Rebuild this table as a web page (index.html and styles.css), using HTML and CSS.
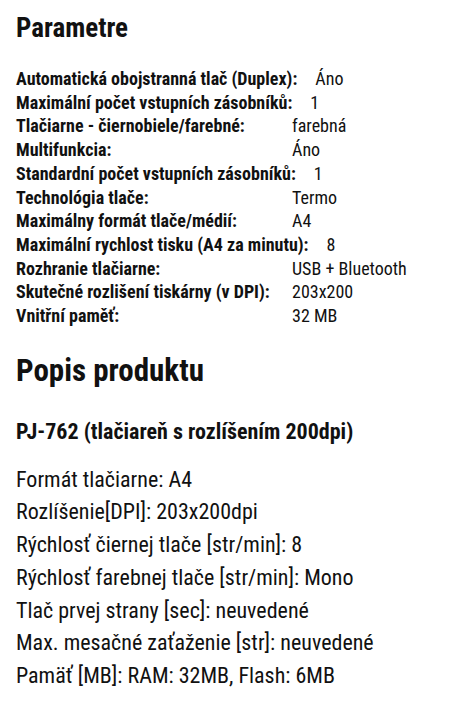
FILE: index.html
```html
<!DOCTYPE html>
<html lang="sk">
<head>
<meta charset="utf-8">
<link rel="stylesheet" href="styles.css">
</head>
<body>
<main class="page">
  <h2 class="title">Parametre</h2>
  <div class="params">
    <div class="row"><span class="label">Automatická obojstranná tlač (Duplex):</span><span class="value">Áno</span></div>
    <div class="row"><span class="label">Maximální počet vstupních zásobníků:</span><span class="value">1</span></div>
    <div class="row"><span class="label">Tlačiarne - čiernobiele/farebné:</span><span class="value">farebná</span></div>
    <div class="row"><span class="label">Multifunkcia:</span><span class="value">Áno</span></div>
    <div class="row"><span class="label">Standardní počet vstupních zásobníků:</span><span class="value">1</span></div>
    <div class="row"><span class="label">Technológia tlače:</span><span class="value">Termo</span></div>
    <div class="row"><span class="label">Maximálny formát tlače/médií:</span><span class="value">A4</span></div>
    <div class="row"><span class="label">Maximální rychlost tisku (A4 za minutu):</span><span class="value">8</span></div>
    <div class="row"><span class="label">Rozhranie tlačiarne:</span><span class="value">USB + Bluetooth</span></div>
    <div class="row"><span class="label">Skutečné rozlišení tiskárny (v DPI):</span><span class="value">203x200</span></div>
    <div class="row"><span class="label">Vnitřní paměť:</span><span class="value">32 MB</span></div>
  </div>
  <h2 class="title big">Popis produktu</h2>
  <h3 class="subtitle">PJ-762 (tlačiareň s rozlíšením 200dpi)</h3>
  <ul class="desc">
    <li>Formát tlačiarne: A4</li>
    <li>Rozlíšenie[DPI]: 203x200dpi</li>
    <li>Rýchlosť čiernej tlače [str/min]: 8</li>
    <li>Rýchlosť farebnej tlače [str/min]: Mono</li>
    <li>Tlač prvej strany [sec]: neuvedené</li>
    <li>Max. mesačné zaťaženie [str]: neuvedené</li>
    <li>Pamäť [MB]: RAM: 32MB, Flash: 6MB</li>
  </ul>
</main>
</body>
</html>
```

FILE: styles.css
```css
html, body {
  margin: 0;
  padding: 0;
  background: #fff;
}
body {
  font-family: Roboto, "Noto Sans", sans-serif;
  font-stretch: condensed;
  color: #111;
}
.page {
  padding: 10px 16px 0 16px;
}
.title {
  margin: 0;
  font-size: 27px;
  font-weight: 700;
  line-height: 36px;
}
.params {
  margin-top: 21px;
  font-size: 18px;
  line-height: 23.7px;
}
.row {
  display: block;
  white-space: nowrap;
}
.label {
  display: inline-block;
  min-width: 258px;
  padding-right: 18px;
  font-weight: 700;
}
.value {
  font-weight: 400;
}
.big {
  margin-top: 23px;
  font-size: 31px;
  line-height: 40px;
}
.subtitle {
  margin: 26px 0 0 0;
  font-size: 22px;
  font-weight: 700;
  line-height: 30px;
}
.desc {
  list-style: none;
  margin: 17px 0 0 0;
  padding: 0;
  font-size: 22px;
  line-height: 32.7px;
}
```
